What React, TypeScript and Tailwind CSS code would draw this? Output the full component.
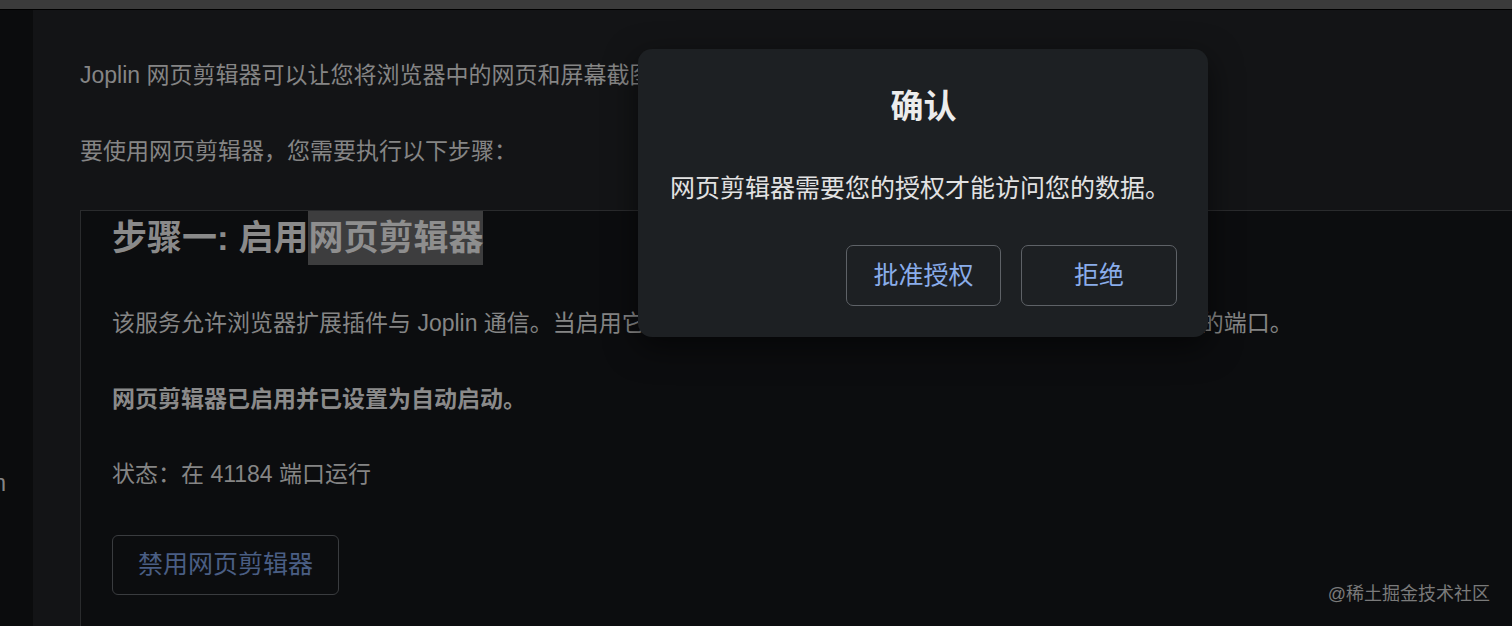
import React from "react";

const FONT = "font-['Liberation_Sans','Noto_Sans_CJK_SC',sans-serif]";

function ConfirmDialog(): React.ReactElement {
  return (
    <div className="absolute left-[638px] top-[49px] flex h-[288px] w-[570px] flex-col rounded-[14px] bg-[#1d2023] pl-[32px] pr-[31px] pt-[38px] shadow-[0_10px_32px_rgba(0,0,0,0.55)]">
      <h3 className="text-center text-[33px] font-bold leading-[40px] text-[#ececec]">
        确认
      </h3>
      <p className="mt-[44px] whitespace-nowrap text-[25px] leading-[34px] text-[#e2e2e2]">
        网页剪辑器需要您的授权才能访问您的数据。
      </p>
      <div className="mt-[40px] flex justify-end gap-[20px]">
        <button className="h-[61px] w-[155px] rounded-[7px] border-[1.5px] border-[#5e6267] text-[25px] text-[#8aadea]">
          批准授权
        </button>
        <button className="h-[61px] w-[156px] rounded-[7px] border-[1.5px] border-[#5e6267] text-[25px] text-[#8aadea]">
          拒绝
        </button>
      </div>
    </div>
  );
}

export default function App(): React.ReactElement {
  return (
    <div
      className={`relative flex h-[626px] w-full flex-col overflow-hidden bg-[#131416] ${FONT}`}
    >
      {/* window title bar, mostly cut off */}
      <div className="h-[10px] shrink-0 border-b border-black bg-[#3b3b3b]" />

      <div className="flex min-h-0 flex-1">
        {/* sidebar edge */}
        <div className="w-[33px] shrink-0 overflow-hidden bg-[#0b0c0d]">
          <div className="mt-[457px] flex justify-end whitespace-nowrap text-[23px] leading-[32px] text-[#858585]">
            <span className="pr-[27px]">关于 Joplin</span>
          </div>
        </div>

        {/* settings page */}
        <div className="min-w-0 flex-1 pl-[47px] pt-[49px]">
          <p className="whitespace-nowrap text-[23px] leading-[32px] text-[#858585]">
            Joplin 网页剪辑器可以让您将浏览器中的网页和屏幕截图保存到 Joplin 中。
          </p>
          <p className="mt-[44px] whitespace-nowrap text-[23px] leading-[32px] text-[#858585]">
            要使用网页剪辑器，您需要执行以下步骤：
          </p>

          <div className="mt-[43px] h-[500px] border-l border-t border-[#2a2b2d] bg-[#0c0d0f] pl-[31px]">
            <h2 className="whitespace-nowrap text-[35px] font-bold leading-[54px] text-[#8a8a8a]">
              步骤一: 启用
              <span className="inline-block bg-[#3d3d3e] leading-[54px] text-[#8e8e8e]">
                网页剪辑器
              </span>
            </h2>
            <p className="mt-[42px] whitespace-nowrap text-[23px] leading-[32px] text-[#858585]">
              该服务允许浏览器扩展插件与 Joplin 通信。当启用它时，您的防火墙可能会提示您允许 Joplin 监听一个特定的端口。
            </p>
            <p className="mt-[44px] whitespace-nowrap text-[23px] font-bold leading-[32px] text-[#8a8a8a]">
              网页剪辑器已启用并已设置为自动启动。
            </p>
            <p className="mt-[43px] whitespace-nowrap text-[23px] leading-[32px] text-[#858585]">
              状态：在 41184 端口运行
            </p>
            <button className="mt-[45px] h-[60px] w-[227px] rounded-[6px] border-[1.5px] border-[#3a3c3f] text-[25px] text-[#4a5e84]">
              禁用网页剪辑器
            </button>
          </div>
        </div>
      </div>

      <ConfirmDialog />

      <span className="absolute bottom-[20px] right-[22px] text-[18px] leading-[24px] text-[#7a7a7a]">
        @稀土掘金技术社区
      </span>
    </div>
  );
}
